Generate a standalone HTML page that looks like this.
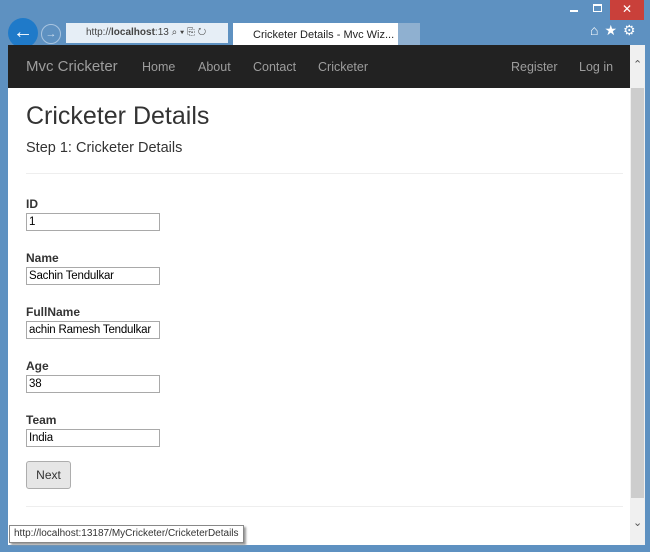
<!DOCTYPE html>
<html><head><style>
*{margin:0;padding:0;box-sizing:border-box}
body{width:650px;height:552px;background:#5e91c1;position:relative;overflow:hidden;font-family:"Liberation Sans",sans-serif}
.abs{position:absolute}
.page{left:8px;top:45px;width:622px;height:500px;background:#fff}
.nav{left:8px;top:45px;width:622px;height:43px;background:#222}
.nav span{position:absolute;top:15px;font-size:12.5px;color:#9d9d9d}
.sb{left:630px;top:45px;width:15px;height:500px;background:#f0f0f0}
.thumb{left:631px;top:88px;width:13px;height:410px;background:#cdcdcd}
label{position:absolute;left:26px;font-size:12px;font-weight:bold;color:#333}
.in{position:absolute;left:26px;width:134px;height:18px;border:1px solid #a9a9a9;font-size:11.5px;letter-spacing:-0.2px;line-height:16px;padding:0 2px;color:#000;overflow:hidden;white-space:nowrap}
</style></head><body>
<div class="abs" style="left:570px;top:10px;width:8px;height:2px;background:#fff"></div>
<div class="abs" style="left:593px;top:4px;width:9px;height:8px;border:1px solid #fff;border-top-width:2px"></div>
<div class="abs" style="left:610px;top:0;width:34px;height:20px;background:#c9403a;color:#fff;font-size:12px;text-align:center;line-height:18px">✕</div>
<div class="abs" style="left:8px;top:18px;width:30px;height:30px;border-radius:50%;background:#1f7ac9;color:#fff;font-size:20px;text-align:center;line-height:28px;font-weight:bold">←</div>
<div class="abs" style="left:41px;top:24px;width:20px;height:20px;border-radius:50%;border:1px solid #a8c4e0;color:#cfe0f0;font-size:11px;text-align:center;line-height:18px">→</div>
<div class="abs" style="left:66px;top:23px;width:162px;height:20px;background:#e6eef6;font-size:10px;color:#444;padding:4px 0 0 20px;white-space:nowrap">http://<b>localhost</b>:13 ⌕ ▾ ⎘ ↻</div>
<div class="abs" style="left:233px;top:23px;width:165px;height:22px;background:#fff;font-size:11px;color:#222;padding:5px 0 0 20px;white-space:nowrap">Cricketer Details - Mvc Wiz... <span style="color:#888;margin-left:4px">✕</span></div>
<div class="abs" style="left:398px;top:23px;width:22px;height:22px;background:#8fb0d0"></div>
<div class="abs" style="left:590px;top:22px;color:#fff;font-size:14px;letter-spacing:6px">⌂★⚙</div>
<div class="abs page"></div>
<div class="abs nav">
<span style="left:18px;top:13px;font-size:15px;color:#9d9d9d">Mvc Cricketer</span>
<span style="left:134px">Home</span><span style="left:190px">About</span><span style="left:245px">Contact</span><span style="left:310px">Cricketer</span>
<span style="left:503px">Register</span><span style="left:571px">Log in</span>
</div>
<div class="abs sb"></div><div class="abs thumb"></div>
<div class="abs" style="left:633px;top:58px;font-size:11px;color:#555">⌃</div>
<div class="abs" style="left:633px;top:516px;font-size:11px;color:#555">⌄</div>
<div class="abs" style="left:26px;top:102px;font-size:25px;color:#333">Cricketer Details</div>
<div class="abs" style="left:26px;top:140px;font-size:14.5px;color:#333">Step 1: Cricketer Details</div>
<div class="abs" style="left:26px;top:173px;width:597px;height:1px;background:#eee"></div>
<label style="top:197px">ID</label><div class="in" style="top:213px">1</div>
<label style="top:251px">Name</label><div class="in" style="top:267px">Sachin Tendulkar</div>
<label style="top:305px">FullName</label><div class="in" style="top:321px">achin Ramesh Tendulkar</div>
<label style="top:359px">Age</label><div class="in" style="top:375px">38</div>
<label style="top:413px">Team</label><div class="in" style="top:429px">India</div>
<div class="abs" style="left:26px;top:461px;width:45px;height:28px;background:#e6e6e6;border:1px solid #adadad;border-radius:3px;font-size:12px;color:#333;text-align:center;line-height:26px">Next</div>
<div class="abs" style="left:26px;top:506px;width:597px;height:1px;background:#eee"></div>
<div class="abs" style="left:9px;top:525px;height:18px;background:#fff;border:1px solid #888;box-shadow:2px 2px 2px #999;font-size:10px;color:#333;line-height:16px;padding:0 4px">http://localhost:13187/MyCricketer/CricketerDetails</div>
</body></html>
